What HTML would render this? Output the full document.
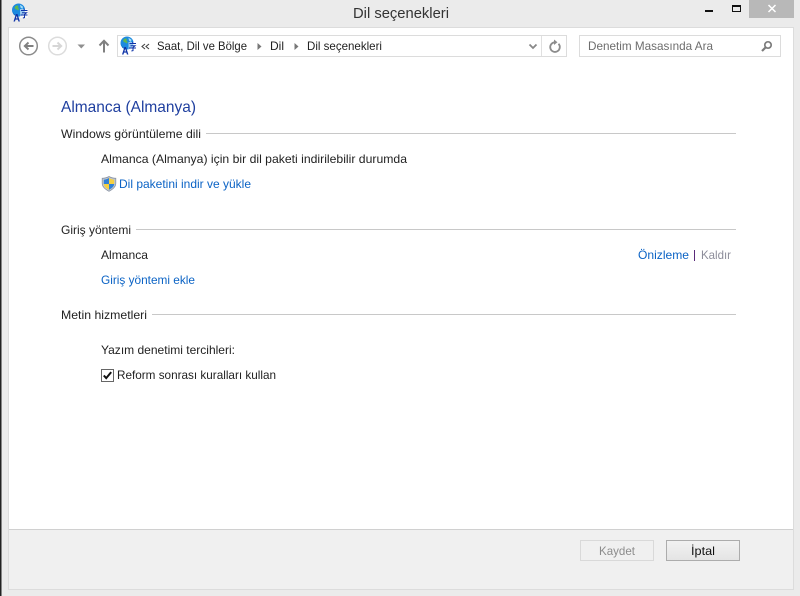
<!DOCTYPE html>
<html><head><meta charset="utf-8"><style>
html,body{margin:0;padding:0;background:#ebebeb;width:800px;height:596px;overflow:hidden}
svg{display:block}
text{font-family:"Liberation Sans",sans-serif;font-size:12px;fill:#222}
</style></head><body>
<svg width="800" height="596" viewBox="0 0 800 596" xmlns="http://www.w3.org/2000/svg">
<defs>
<linearGradient id="g" x1="0" y1="0" x2="0" y2="1"><stop offset="0" stop-color="#f2f2f2"/><stop offset="1" stop-color="#e4e4e4"/></linearGradient>
<g id="globe">
<circle cx="6.500" cy="6" r="6.500" fill="#1c8ae0"/>
<path d="M3 2.500l2-1.200 1.500.8-.6 1.800 1.300 1-1 1.600-1.300-1-1.500-.4-.8-1.300z" fill="#5fb850"/>
<path d="M8 .8l3 2-.5 2.200-2-1.500z" fill="#a8def5"/>
<path d="M.5 7.500l2 3 2 1-2.500-.5z" fill="#0f5fb0"/>
<path d="M1.500 17.500l2.400-7.500h1.600l2.400 7.500h-1.500l-.5-1.900h-2.400l-.5 1.900zM3.900 14.400h1.600l-.8-2.700z" fill="#0f34a8"/>
<rect x="8" y="5" width="8" height="9" fill="#fff" fill-opacity=".55"/>
<path d="M9 6.500h6.500M12.200 4.800v1.700M10 8.800h4.500l-2 1.500v3.300l-1.600.4M8.500 11h7" stroke="#0f34a8" stroke-width="1" fill="none"/>
</g>
</defs>
<rect width="800" height="596" fill="#ebebeb"/>
<rect x="0" y="0" width="1.500" height="596" fill="#222"/>
<use href="#globe" x="12" y="4"/>
<text x="353" y="18" textLength="96" lengthAdjust="spacingAndGlyphs" style="font-size:15px;fill:#333">Dil seçenekleri</text>
<rect x="705" y="10" width="8" height="2" fill="#111"/>
<rect x="732.500" y="5.500" width="8" height="6" fill="none" stroke="#111"/>
<rect x="732" y="5" width="9" height="2" fill="#111"/>
<rect x="749" y="0" width="45" height="18" fill="#b8b8b8"/>
<path d="M768.500 5l7 7M775.500 5l-7 7" stroke="#fff" stroke-width="1.500"/>

<rect x="8.500" y="27.500" width="785" height="562" fill="#fff" stroke="#dcdcdc"/>
<rect x="9" y="530" width="784" height="59" fill="#f0f0f0"/>
<rect x="9" y="529" width="784" height="1" fill="#d0d0d0"/>

<circle cx="28.500" cy="46" r="8.800" fill="#fff" stroke="#8c8c8c" stroke-width="1.500"/>
<path d="M33.500 46h-8.500M28.500 42.500l-3.700 3.500 3.700 3.500" fill="none" stroke="#808080" stroke-width="1.900"/>
<circle cx="57.500" cy="46" r="8.800" fill="#fff" stroke="#dcdcdc" stroke-width="1.500"/>
<path d="M52.500 46h8.500M57.500 42.500l3.700 3.500-3.700 3.500" fill="none" stroke="#d6d6d6" stroke-width="1.900"/>
<path d="M77.500 44.500h7.500l-3.700 4z" fill="#8f8f8f"/>
<path d="M104 52.500v-11M99.500 45.500l4.500-4.700 4.500 4.700" fill="none" stroke="#808080" stroke-width="2"/>

<rect x="117.500" y="35.500" width="449" height="21" fill="#fff" stroke="#dcdcdc"/>
<rect x="541" y="36" width="1" height="20" fill="#e0e0e0"/>
<use href="#globe" x="120.500" y="37"/>
<path d="M145 44l-3 2.500 3 2.500M149 44l-3 2.500 3 2.500" fill="none" stroke="#444" stroke-width="1.100"/>
<text x="157" y="50" textLength="90" lengthAdjust="spacingAndGlyphs">Saat, Dil ve Bölge</text>
<path d="M257.500 43l4 3.500-4 3.500z" fill="#777"/>
<text x="270" y="50" textLength="14" lengthAdjust="spacingAndGlyphs">Dil</text>
<path d="M294.500 43l4 3.500-4 3.500z" fill="#777"/>
<text x="307" y="50" textLength="75" lengthAdjust="spacingAndGlyphs">Dil seçenekleri</text>
<path d="M529.500 44.500l3.500 3.500 3.500-3.500" fill="none" stroke="#888" stroke-width="1.800"/>
<path d="M558.500 43.800a4.800 4.800 0 1 1-3.800-1.500" fill="none" stroke="#8c8c8c" stroke-width="1.800"/>
<path d="M554 39.500v5.500l3.500-2.700z" fill="#8c8c8c"/>

<rect x="579.500" y="35.500" width="201" height="21" fill="#fff" stroke="#dcdcdc"/>
<text x="588" y="50" textLength="125" lengthAdjust="spacingAndGlyphs" style="fill:#6d6d6d">Denetim Masasında Ara</text>
<circle cx="768" cy="45" r="3.200" fill="none" stroke="#7c7c7c" stroke-width="1.700"/>
<path d="M765.500 47.500l-3.500 3.500" stroke="#7c7c7c" stroke-width="2.200"/>

<text x="61" y="112" textLength="135" lengthAdjust="spacingAndGlyphs" style="font-size:16px;fill:#1f3f9f">Almanca (Almanya)</text>

<text x="61" y="138" textLength="140" lengthAdjust="spacingAndGlyphs">Windows görüntüleme dili</text>
<rect x="206" y="133" width="530" height="1" fill="#c8c8c8"/>
<text x="101" y="163" textLength="306" lengthAdjust="spacingAndGlyphs">Almanca (Almanya) için bir dil paketi indirilebilir durumda</text>
<path d="M109 176.500c2 1.200 4 1.800 6.800 1.800v5c0 3.800-3.300 6-6.800 8-3.500-2-6.800-4.200-6.800-8v-5c2.800 0 4.800-.6 6.800-1.800z" fill="#c2c8d0" stroke="#8a94a4" stroke-width=".8"/>
<path d="M109 178v6h-5.200v-4.300c2-.1 3.600-.7 5.200-1.700z" fill="#2f80d8"/>
<path d="M109 178c1.600 1 3.200 1.600 5.200 1.700v4.300h-5.200z" fill="#f6d040"/>
<path d="M103.800 184h5.200v5.800c-2.600-1.500-5-3-5.200-5.800z" fill="#f6d040"/>
<path d="M109 184h5.200c-.2 2.800-2.600 4.300-5.200 5.800z" fill="#2f80d8"/>
<text x="119" y="188" textLength="132" lengthAdjust="spacingAndGlyphs" style="fill:#0b63c5">Dil paketini indir ve yükle</text>

<text x="61" y="234" textLength="70" lengthAdjust="spacingAndGlyphs">Giriş yöntemi</text>
<rect x="136" y="229" width="600" height="1" fill="#c8c8c8"/>
<text x="101" y="259" textLength="47" lengthAdjust="spacingAndGlyphs">Almanca</text>
<text x="638" y="259" textLength="51" lengthAdjust="spacingAndGlyphs" style="fill:#0b63c5">Önizleme</text>
<rect x="694" y="250" width="1" height="11" fill="#5a2a7a"/>
<text x="701" y="259" textLength="30" lengthAdjust="spacingAndGlyphs" style="fill:#8d8d9a">Kaldır</text>
<text x="101" y="284" textLength="94" lengthAdjust="spacingAndGlyphs" style="fill:#0b63c5">Giriş yöntemi ekle</text>

<text x="61" y="319" textLength="86" lengthAdjust="spacingAndGlyphs">Metin hizmetleri</text>
<rect x="152" y="314" width="584" height="1" fill="#c8c8c8"/>
<text x="101" y="354" textLength="134" lengthAdjust="spacingAndGlyphs">Yazım denetimi tercihleri:</text>
<rect x="101.500" y="369.500" width="12" height="12" fill="#fff" stroke="#666"/>
<path d="M103.800 375.500l2.400 2.600 5-6" fill="none" stroke="#111" stroke-width="2"/>
<text x="117" y="379" textLength="159" lengthAdjust="spacingAndGlyphs">Reform sonrası kuralları kullan</text>

<rect x="580.500" y="540.500" width="73" height="20" fill="#f0f0f0" stroke="#d9d9d9"/>
<text x="599" y="555" textLength="36" lengthAdjust="spacingAndGlyphs" style="fill:#8c8c8c">Kaydet</text>
<rect x="666.500" y="540.500" width="73" height="20" fill="url(#g)" stroke="#acacac"/>
<text x="691" y="555" textLength="24" lengthAdjust="spacingAndGlyphs" style="fill:#111">İptal</text>
</svg>
</body></html>
